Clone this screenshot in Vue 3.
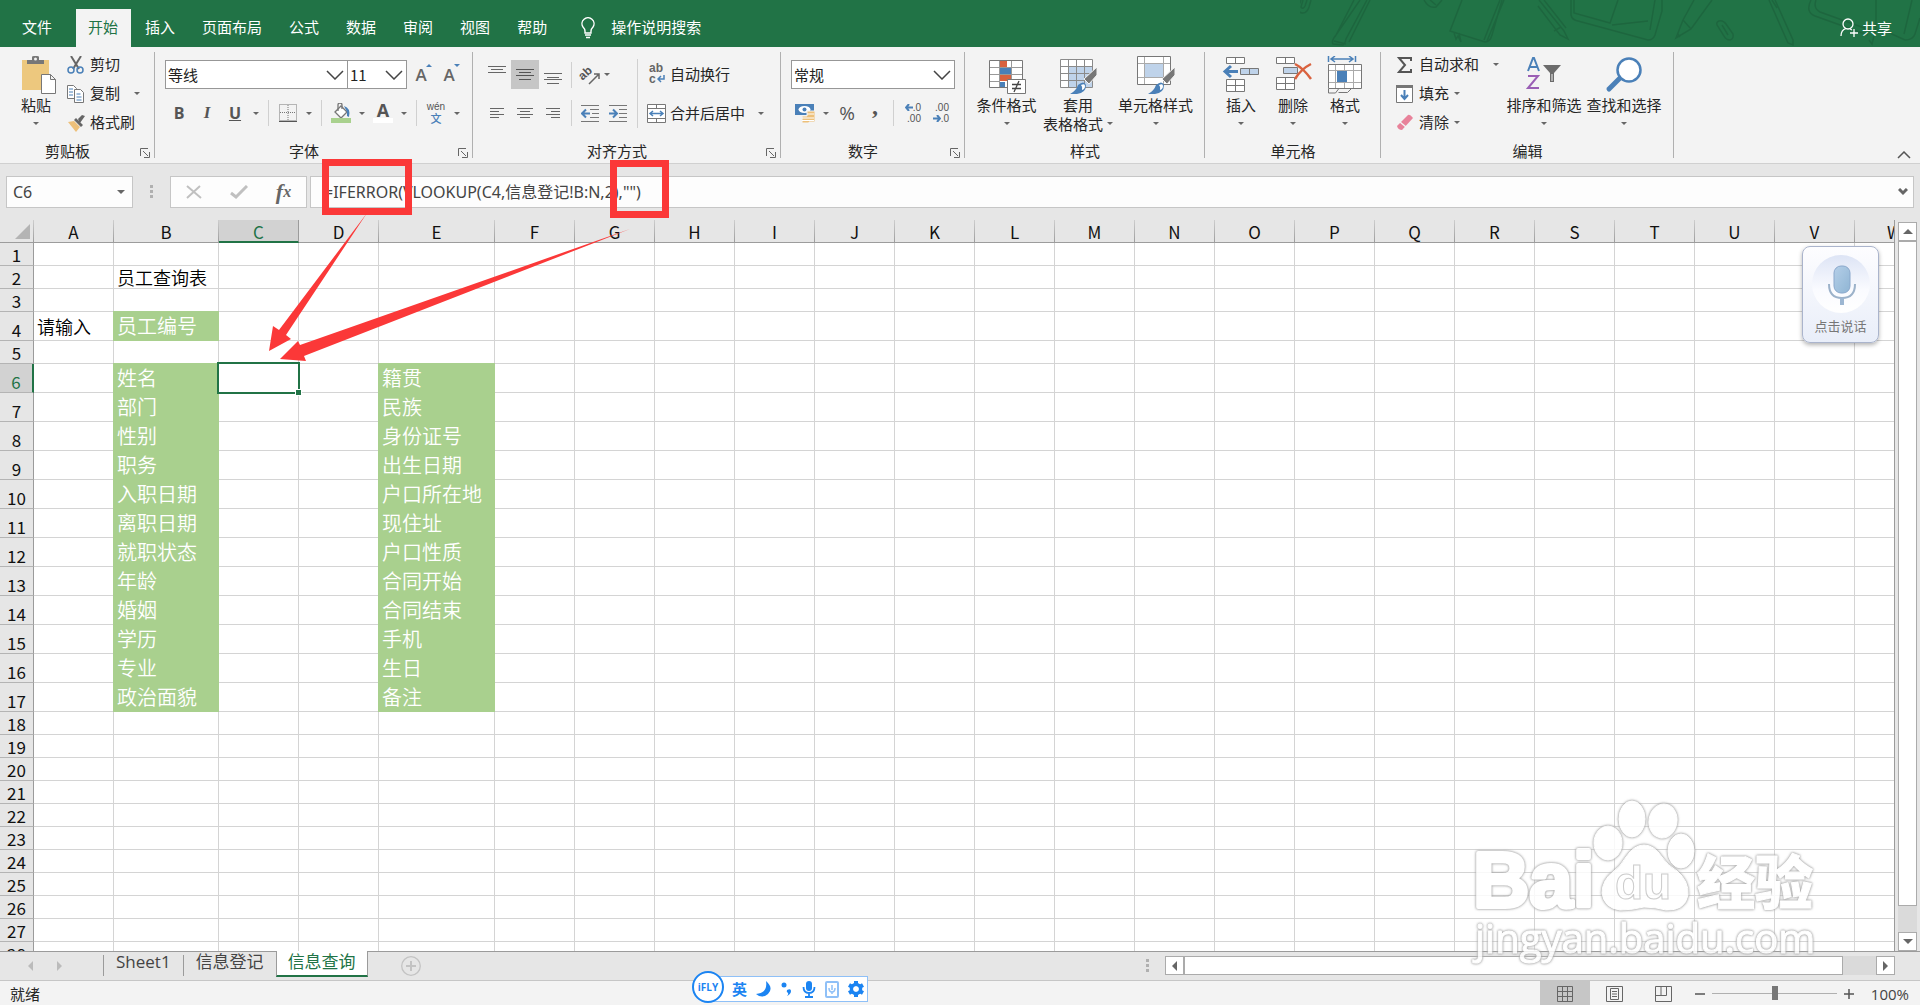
<script setup>
const tabs = ['文件', '开始', '插入', '页面布局', '公式', '数据', '审阅', '视图', '帮助']

const letters = 'ABCDEFGHIJKLMNOPQRSTUVW'.split('')
const wide = { B: 105, E: 116 }
const columns = letters.map((name) => ({ name, width: wide[name] || 80 }))

const left = ['姓名', '部门', '性别', '职务', '入职日期', '离职日期', '就职状态', '年龄', '婚姻', '学历', '专业', '政治面貌']
const right = ['籍贯', '民族', '身份证号', '出生日期', '户口所在地', '现住址', '户口性质', '合同开始', '合同结束', '手机', '生日', '备注']

const cells = { B2: { text: '员工查询表' }, A4: { text: '请输入' }, B4: { text: '员工编号', green: true } }
left.forEach((text, i) => { cells['B' + (i + 6)] = { text, green: true } })
right.forEach((text, i) => { cells['E' + (i + 6)] = { text, green: true } })

const rows = Array.from({ length: 28 }, (_, i) => {
  const n = i + 1
  return { n, tall: n === 4 || (n >= 6 && n <= 17) }
})
const cell = (c, n) => cells[c + n] || {}
const formula = '=IFERROR(VLOOKUP(C4,信息登记!B:N,2),"")'
</script>

<template>
  <div class="app">
    <header class="titlebar">
      <svg class="doodles" width="620" height="47" viewBox="1300 0 620 47" fill="none" stroke="#1d633d" stroke-width="1.5" aria-hidden="true">
        <path d="M1301 0l-3 8q0 5 5 5q4 0 6-6l2-7M1303 0l-2 7q2 3 4-1l2-6" />
        <path d="M1360 0l-24 35q-5 6-3 9l10 1q3-3 3-6l21-39M1354 0l-19 37M1349 42l21-42M1334 41l12 3" />
        <path d="M1424 0q5 9 12 7l6-7M1430 0l6 5" />
        <path d="M1462 0l-12 31 35 11q5 0 7-7l10-35M1484 40l16-40M1487 41l17-41M1454 33l2 6 2-3 3 6-2-9" />
        <path d="M1539 0l25 31 4 8-8-4-22-29M1544 0l22 28M1554 31l7-4" />
        <path d="M1571 0v15q1 5 7 6l70 19q5 0 7-5l7-24V0M1574 0v13l36 10 8-23M1612 25l36-4M1655 0l-5 30" />
        <path d="M1683 20l-7 18 15-9 21-29M1683 20l11-20M1683 20l8 9M1678 34l2 3" />
        <path d="M1719 21q4-1 7 3l7 10q1 5-3 6-4 0-6-4l-7-11q-1-3 2-4zM1722 25l6 10" />
        <path d="M1769 0l19 43 5 2v-5L1775 0M1772 0l5 8" />
        <path d="M1811 0q-6 12 4 16l53 19M1816 0q-3 8 4 12l50 18M1876 0v28l-4 16-3-4M1905 40q8 0 10-6l5-16M1881 29l24 11M1912 0l-8 34" />
      </svg>
      <nav class="tabs">
        <button v-for="(t, i) in tabs" :key="t" class="tab" :class="{ active: i === 1, file: i === 0 }">{{ t }}</button>
        <button class="tell">
          <svg width="16" height="22" viewBox="0 0 16 22" fill="none" stroke="#fff" stroke-width="1.4"><path d="M5 16v-2q0-2-2-4a6 6 0 1 1 10 0q-2 2-2 4v2zM5 18h6M6 20.500h4" /></svg>
          <span>操作说明搜索</span>
        </button>
      </nav>
      <button class="share">
        <svg width="19" height="20" viewBox="0 0 19 20" fill="none" stroke="#fff" stroke-width="1.300"><circle cx="8" cy="6" r="5" /><path d="M1 18q0-6 5-7.500M10 11l2 1M14 11v8M10 15h8" /></svg>
        <span>共享</span>
      </button>
    </header>

    <section class="ribbon">
      <div class="group g-clip">
        <div class="body">
          <button class="big paste">
            <svg width="38" height="38" viewBox="0 0 38 38"><path d="M2 4h27v30H2z" fill="#edc87e" /><path d="M7 8V4h5V1q0-1 2-1h3q2 0 2 1v3h5v4z" fill="#777" /><circle cx="15.500" cy="3" r="1.500" fill="#f3f3f3" /><path d="M21.500 18.500h9l5 5v14h-14zM30.500 18.500v5h5" fill="#fff" stroke="#777" /></svg>
            <span>粘贴</span><span><i class="caret"></i></span>
          </button>
          <div class="stack">
            <button class="small"><svg width="18" height="18" viewBox="0 0 18 18" fill="none"><path d="M4 0l8 13M14 0L6 13" stroke="#666" stroke-width="2" /><circle cx="4" cy="14" r="3" stroke="#4a80b8" stroke-width="1.500" /><circle cx="13" cy="14" r="3" stroke="#4a80b8" stroke-width="1.500" /></svg><span>剪切</span></button>
            <button class="small"><svg width="18" height="18" viewBox="0 0 18 18" fill="#fff" stroke="#777"><path d="M.5.500h6l3 3v10h-9z" /><path d="M7.500 4.500h6l3 3v10h-9z" /><path d="M2 4h4M2 7h4M2 10h4M9.500 9h4M9.500 12h5M9.500 15h5" stroke="#4a80b8" /></svg><span>复制</span><i class="caret far"></i></button>
            <button class="small"><svg width="18" height="18" viewBox="0 0 18 18"><path d="M1 8l6-1 6 6-4 5z" fill="#edc07a" /><path d="M7 6l2-2 7 7-2 2zM11 5l4-4 3 1-5 7z" fill="#666" /></svg><span>格式刷</span></button>
          </div>
        </div>
        <div class="title dlg">剪贴板<svg class="launch" width="10" height="10" viewBox="0 0 10 10" fill="none" stroke="#666"><path d="M.5 8V.5H8M3 3l5 5M9.500 4v5.500H4" /></svg></div>
      </div>

      <div class="group g-font">
        <div class="body rows">
          <div class="row">
            <label class="combo fontname"><select aria-label="字体"><option>等线</option></select><svg width="18" height="10" viewBox="0 0 18 10" fill="none" stroke="#444" stroke-width="1.500"><path d="M1 1l8 8 8-8" /></svg></label>
            <label class="combo fontsize"><select aria-label="字号"><option>11</option></select><svg width="18" height="10" viewBox="0 0 18 10" fill="none" stroke="#444" stroke-width="1.500"><path d="M1 1l8 8 8-8" /></svg></label>
            <button class="tool grow" aria-label="增大字号">A<i class="up"></i></button>
            <button class="tool grow" aria-label="减小字号">A<i class="down"></i></button>
          </div>
          <div class="row low">
            <button class="tool bold">B</button><button class="tool ital">I</button><button class="tool under">U</button><button class="drop" aria-label="下划线选项"><i class="caret"></i></button>
            <span class="sep"></span>
            <button class="tool" aria-label="边框"><svg width="18" height="18" viewBox="0 0 18 18" fill="none" stroke="#777"><path d="M.5.500h17v16H.5zM9 1v16M1 8.500h16" stroke-dasharray="1 1" /><path d="M0 17.500h18" stroke="#555" /></svg></button><button class="drop" aria-label="边框选项"><i class="caret"></i></button>
            <span class="sep"></span>
            <button class="tool" aria-label="填充颜色"><svg width="20" height="20" viewBox="0 0 20 20"><path d="M4 9l6-6 6 6-6 6z" fill="#fff" stroke="#777" stroke-width="1.300" /><path d="M7 8V2q0-2 2-2t2 2v4" fill="none" stroke="#777" stroke-width="1.300" /><path d="M13 3q7 2 5 11l-2-1v-4z" fill="#4a80b8" /><path d="M0 15h20v5H0z" fill="#a9d18e" /></svg></button><button class="drop" aria-label="填充选项"><i class="caret"></i></button>
            <button class="tool fontcolor" aria-label="字体颜色">A</button><button class="drop" aria-label="字体颜色选项"><i class="caret"></i></button>
            <span class="sep"></span>
            <button class="tool pinyin"><span>wén</span><b>文</b></button><button class="drop" aria-label="拼音选项"><i class="caret"></i></button>
          </div>
        </div>
        <div class="title dlg">字体<svg class="launch" width="10" height="10" viewBox="0 0 10 10" fill="none" stroke="#666"><path d="M.5 8V.5H8M3 3l5 5M9.500 4v5.500H4" /></svg></div>
      </div>

      <div class="group g-align">
        <div class="body">
          <div class="rows">
            <div class="row">
              <button class="tool" aria-label="顶端对齐"><svg width="18" height="18" viewBox="0 0 18 18" stroke="#666"><path d="M0 .5h18M3 3.500h12M0 6.500h18" /></svg></button>
              <button class="tool pressed" aria-label="垂直居中"><svg width="18" height="18" viewBox="0 0 18 18" stroke="#555"><path d="M0 3.500h18M3 6.500h12M0 9.500h18M3 13.500h12" /></svg></button>
              <button class="tool" aria-label="底端对齐"><svg width="18" height="18" viewBox="0 0 18 18" stroke="#666"><path d="M0 7.500h18M3 11.500h12M0 13.500h18M3 17.500h12" /></svg></button>
              <span class="sep tight"></span>
              <button class="tool narrow" aria-label="方向"><span class="slant">ab</span><svg class="slantarrow" width="12" height="12" viewBox="0 0 12 12"><path d="M1 11L11 1M6 1h5v5" fill="none" stroke="#666" stroke-width="1.500" /></svg></button>
              <button class="drop" aria-label="方向选项"><i class="caret"></i></button>
            </div>
            <div class="row low">
              <button class="tool" aria-label="左对齐"><svg width="18" height="12" viewBox="0 0 18 12" stroke="#666"><path d="M2 1.500h14M2 4.500h9M2 7.500h14M2 10.500h9" /></svg></button>
              <button class="tool" aria-label="居中"><svg width="18" height="12" viewBox="0 0 18 12" stroke="#666"><path d="M1 1.500h16M4 4.500h10M1 7.500h16M4 10.500h10" /></svg></button>
              <button class="tool" aria-label="右对齐"><svg width="18" height="12" viewBox="0 0 18 12" stroke="#666"><path d="M2 1.500h14M7 4.500h9M2 7.500h14M7 10.500h9" /></svg></button>
              <span class="sep tight"></span>
              <button class="tool" aria-label="减少缩进"><svg width="18" height="17" viewBox="0 0 18 17" fill="none" stroke="#777"><path d="M0 .5h18M9 4.500h9M11 8.500h7M9 12.500h9M0 16.500h18" /><path d="M9 8.500H2M5 4.500l-4 4 4 4" stroke="#4a80b8" stroke-width="2" /></svg></button>
              <button class="tool" aria-label="增加缩进"><svg width="18" height="17" viewBox="0 0 18 17" fill="none" stroke="#777"><path d="M0 .5h18M10 4.500h8M10 8.500h8M10 12.500h8M0 16.500h18" /><path d="M0 8.500h7M4 4.500l4 4-4 4" stroke="#4a80b8" stroke-width="2" /></svg></button>
            </div>
          </div>
          <span class="tallsep"></span>
          <div class="rows wraps">
            <button class="small"><span class="wrapicon"><span>ab</span><span>c<svg width="8" height="8" viewBox="0 0 8 8" fill="none" stroke="#4a80b8" stroke-width="1.500"><path d="M7 0v4H1M4 1L1 4l3 3" /></svg></span></span><span>自动换行</span></button>
            <button class="small"><svg width="20" height="19" viewBox="0 0 20 19" fill="#fff" stroke="#777"><path d="M1.500.500h18v18h-18zM10.500.500v4M10.500 14.500v4M1.500 4.500h18M1.500 14.500h18" /><path d="M5 9.500h11M7 7L4 9.500 7 12M14 7l3 2.500-3 2.500" fill="none" stroke="#4a80b8" stroke-width="1.500" /></svg><span>合并后居中</span><i class="caret far"></i></button>
          </div>
        </div>
        <div class="title dlg">对齐方式<svg class="launch" width="10" height="10" viewBox="0 0 10 10" fill="none" stroke="#666"><path d="M.5 8V.5H8M3 3l5 5M9.500 4v5.500H4" /></svg></div>
      </div>

      <div class="group g-num">
        <div class="body rows">
          <div class="row">
            <label class="combo numfmt"><select aria-label="数字格式"><option>常规</option></select><svg width="18" height="10" viewBox="0 0 18 10" fill="none" stroke="#444" stroke-width="1.500"><path d="M1 1l8 8 8-8" /></svg></label>
          </div>
          <div class="row low">
            <button class="tool" aria-label="会计格式"><svg width="20" height="20" viewBox="0 0 20 20"><path d="M0 1h19v11H0z" fill="#4a80b8" /><ellipse cx="9.500" cy="6.500" rx="6" ry="3.500" fill="#fff" /><circle cx="9.500" cy="6.500" r="2" fill="#4a80b8" /><path d="M12 8h8v11h-6v1H7v-7h5z" fill="#edc07a" stroke="#f3f3f3" /><path d="M12 11h7M7 15h12M7 17.500h12" stroke="#fff" /></svg></button><button class="drop" aria-label="会计格式选项"><i class="caret"></i></button>
            <button class="tool pct">%</button><button class="tool comma">,</button>
            <span class="sep tight"></span>
            <button class="tool dec" aria-label="增加小数位数"><span><svg width="8" height="7" viewBox="0 0 8 7" fill="none" stroke="#4a80b8" stroke-width="2"><path d="M8 3.500H2M4 0L1 3.500 4 7" /></svg>.0</span><span>.00</span></button>
            <button class="tool dec" aria-label="减少小数位数"><span>.00</span><span><svg width="8" height="7" viewBox="0 0 8 7" fill="none" stroke="#4a80b8" stroke-width="2"><path d="M0 3.500h6M4 0l3 3.500L4 7" /></svg>.0</span></button>
          </div>
        </div>
        <div class="title dlg">数字<svg class="launch" width="10" height="10" viewBox="0 0 10 10" fill="none" stroke="#666"><path d="M.5 8V.5H8M3 3l5 5M9.500 4v5.500H4" /></svg></div>
      </div>

      <div class="group g-style">
        <div class="body">
          <button class="big w75">
            <svg width="38" height="38" viewBox="0 0 38 38"><path d="M1.500 4.500h33v27h-33z" fill="#fff" stroke="#777" /><path d="M12 5h7v6h-7zM12 19h11v6H12z" fill="#d9623f" /><path d="M12 12h11v6H12zM12 26h5v5h-5z" fill="#4a80b8" /><path d="M11.500 5v26M23.500 5v26M2 11.500h32M2 18.500h32M2 25.500h10" stroke="#999" fill="none" /><path d="M19.500 23.500h18v14h-18z" fill="#fff" stroke="#777" /><path d="M24 28.500h9M24 32.500h9M31 25l-5 11" stroke="#444" stroke-width="1.300" /></svg>
            <span>条件格式</span><span><i class="caret"></i></span>
          </button>
          <button class="big w70">
            <svg width="38" height="38" viewBox="0 0 38 38"><path d="M1.500 3.500h32v28h-32z" fill="#fff" /><path d="M10 11h24v20H10z" fill="#bfd3ea" /><path d="M1.500 3.500h32v28h-32zM9.500 4v27M17.500 4v27M25.500 4v27M2 10.500h31M2 17.500h31M2 24.500h31" fill="none" stroke="#8a8a8a" /><path d="M38 11v8l-8 9-5-5z" fill="#777" stroke="#f3f3f3" /><path d="M11 38q6-3 8-9 6-5 8 0 0 8-9 9z" fill="#4a80b8" /><path d="M22 29q4-2 4 1t-3 4q1-3-1-5z" fill="#fff" /></svg>
            <span>套用</span><span>表格格式<i class="caret"></i></span>
          </button>
          <button class="big w85">
            <svg width="38" height="38" viewBox="0 0 38 38"><path d="M.5.500h33v28H.5z" fill="#fff" stroke="#777" /><path d="M7.500 1v27M26.500 1v27M1 7.500h32M1 21.500h32" stroke="#aaa" /><path d="M8 8h18v13H8z" fill="#bfd3ea" /><path d="M38 11v8l-8 9-5-5z" fill="#777" stroke="#f3f3f3" /><path d="M11 38q6-3 8-9 6-5 8 0 0 8-9 9z" fill="#4a80b8" /><path d="M22 29q4-2 4 1t-3 4q1-3-1-5z" fill="#fff" /></svg>
            <span>单元格样式</span><span><i class="caret"></i></span>
          </button>
        </div>
        <div class="title">样式</div>
      </div>

      <div class="group g-cells">
        <div class="body">
          <button class="big w52">
            <svg width="38" height="38" viewBox="0 0 38 38" fill="#fff" stroke="#777"><path d="M4.500 1.500h18v6h-18zM13.500 1.500v6M4.500 23.500h18v12h-18zM13.500 23.500v12M4.500 29.500h18" /><path d="M18.500 12.500h18v6h-18zM27.500 12.500v6" fill="#bfd3ea" /><path d="M16 15.500H4M9 10l-6 5.500L9 21" fill="none" stroke="#4a80b8" stroke-width="3" /></svg>
            <span>插入</span><span><i class="caret"></i></span>
          </button>
          <button class="big w52">
            <svg width="38" height="38" viewBox="0 0 38 38" fill="#fff" stroke="#777"><path d="M2.500 1.500h18v6h-18zM11.500 1.500v6M2.500 21.500h18v12h-18zM11.500 21.500v12M2.500 27.500h18" /><path d="M9.500 11.500h14v6h-14z" fill="#bfd3ea" /><path d="M21 8q8 4 16 15M37 8q-10 5-16 15" fill="none" stroke="#d9623f" stroke-width="2.500" /></svg>
            <span>删除</span><span><i class="caret"></i></span>
          </button>
          <button class="big w52">
            <svg width="38" height="38" viewBox="0 0 38 38" fill="#fff" stroke="#777"><path d="M2.500 8.500h33v24h-33z" /><path d="M9.500 9v23M18.500 9v23M27.500 9v23M3 14.500h32M3 26.500h32" stroke="#aaa" /><path d="M11 15h10v11H11z" fill="#4a80b8" stroke="none" /><path d="M2.500 33v4h7l3-4M12.500 36.500h9l4-4" fill="none" /><path d="M2.500 0v6M29.500 0v6M6 3h20M9 0L5 3l4 3M23 0l4 3-4 3" fill="none" stroke="#4a80b8" stroke-width="1.500" /></svg>
            <span>格式</span><span><i class="caret"></i></span>
          </button>
        </div>
        <div class="title">单元格</div>
      </div>

      <div class="group g-edit">
        <div class="body">
          <div class="stack">
            <button class="small"><svg width="18" height="18" viewBox="0 0 18 18" fill="none" stroke="#555" stroke-width="2"><path d="M15 5V2H3l6 7-6 7h12v-3" /></svg><span>自动求和</span><i class="caret far"></i></button>
            <button class="small"><svg width="18" height="18" viewBox="0 0 18 18"><path d="M.5.500h16v17H.5z" fill="#fff" stroke="#777" /><path d="M0 0h17v3H0z" fill="#777" /><path d="M8.500 5v9M5 10l3.500 4 3.500-4" fill="none" stroke="#4a80b8" stroke-width="2" /></svg><span>填充</span><i class="caret"></i></button>
            <button class="small"><svg width="18" height="18" viewBox="0 0 18 18"><path d="M1 12L12 1q2-1 5 3L6 16q-4 0-5-4z" fill="#e8829a" /><path d="M4 8l6 5" stroke="#f3f3f3" stroke-width="1.500" /></svg><span>清除</span><i class="caret"></i></button>
          </div>
          <button class="big w80">
            <svg width="38" height="38" viewBox="0 0 38 38"><path d="M3 15L8 2h1l5 13M5 11h7" fill="none" stroke="#4a80b8" stroke-width="2" /><path d="M3 20h10L3 32h11" fill="none" stroke="#9a5fb5" stroke-width="2" /><path d="M18 9h18l-7 8v9h-4v-9z" fill="#6b6b6b" /><path d="M27 18v7" stroke="#f3f3f3" /></svg>
            <span>排序和筛选</span><span><i class="caret"></i></span>
          </button>
          <button class="big w80">
            <svg width="38" height="38" viewBox="0 0 38 38"><path d="M4 33l12-12" stroke="#4a80b8" stroke-width="5" stroke-linecap="round" /><circle cx="24" cy="14" r="11.500" fill="#fff" stroke="#4a80b8" stroke-width="2.500" /></svg>
            <span>查找和选择</span><span><i class="caret"></i></span>
          </button>
        </div>
        <div class="title">编辑</div>
      </div>
      <button class="collapse" aria-label="折叠功能区"><svg width="14" height="8" viewBox="0 0 14 8" fill="none" stroke="#555" stroke-width="1.500"><path d="M1 7l6-6 6 6" /></svg></button>
    </section>

    <section class="formulabar">
      <div class="box namebox"><input value="C6" aria-label="名称框"><i class="caret wide"></i></div>
      <span class="dots"></span>
      <div class="box fx">
        <button aria-label="取消"><svg width="16" height="14" viewBox="0 0 16 14" fill="none" stroke="#c0c0c0" stroke-width="2"><path d="M1 1l14 12M14 1L1 13" /></svg></button>
        <button aria-label="输入"><svg width="18" height="14" viewBox="0 0 18 14" fill="none" stroke="#c0c0c0" stroke-width="3"><path d="M1 8l5 4L17 1" /></svg></button>
        <button class="fxb">f<sub>x</sub></button>
      </div>
      <div class="box formula"><input :value="formula" aria-label="编辑栏"><svg width="10" height="8" viewBox="0 0 10 8" fill="none" stroke="#666" stroke-width="3"><path d="M1 1l4 4 4-4" /></svg></div>
    </section>

    <main class="sheet">
      <div class="gridwrap">
        <table class="grid">
          <colgroup><col class="rowcol"><col v-for="c in columns" :key="c.name" :style="{ width: c.width + 'px' }"></colgroup>
          <thead>
            <tr>
              <th class="corner"><svg width="15" height="15" viewBox="0 0 15 15"><path d="M15 0v15H0z" fill="#b4b4b4" /></svg></th>
              <th v-for="c in columns" :key="c.name" :class="{ sel: c.name === 'C' }">{{ c.name }}</th>
            </tr>
          </thead>
          <tbody>
            <tr v-for="r in rows" :key="r.n" :class="{ tall: r.tall }">
              <th :class="{ sel: r.n === 6 }">{{ r.n }}</th>
              <td v-for="c in columns" :key="c.name" :class="{ green: cell(c.name, r.n).green }">
                {{ cell(c.name, r.n).text }}<span v-if="c.name === 'C' && r.n === 6" class="cursor"></span>
              </td>
            </tr>
          </tbody>
        </table>
      </div>
      <div class="vscroll">
        <button class="sb" aria-label="向上滚动"><i class="tri t-up"></i></button>
        <div class="vthumb"></div>
        <div class="vtrack"></div>
        <button class="sb" aria-label="向下滚动"><i class="tri t-down"></i></button>
      </div>
      <button class="voice">
        <svg width="58" height="60" viewBox="0 0 58 60">
          <defs>
            <linearGradient id="disc" x2="0" y2="1"><stop offset="0" stop-color="#dde4f5" /><stop offset=".6" stop-color="#fafbff" /><stop offset="1" stop-color="#fff" /></linearGradient>
            <linearGradient id="mic" x2="1" y2="1"><stop offset="0" stop-color="#b5cfe8" /><stop offset="1" stop-color="#8fb5d4" /></linearGradient>
          </defs>
          <circle cx="29" cy="30" r="29" fill="url(#disc)" />
          <rect x="22" y="12" width="16" height="27" rx="7" fill="url(#mic)" stroke="#8aa8cc" />
          <path d="M17 30q0 14 13 14t13-14" fill="none" stroke="#9cb2ca" stroke-width="2" /><path d="M30 44v7" stroke="#9cb6d2" stroke-width="4" />
        </svg>
        <span>点击说话</span>
      </button>
    </main>

    <section class="tabbar">
      <div class="sheetnav"><i class="tri t-left dim"></i><i class="tri t-right dim"></i></div>
      <button class="stab">Sheet1</button>
      <button class="stab">信息登记</button>
      <button class="stab on">信息查询</button>
      <button class="add" aria-label="新工作表"><svg width="20" height="20" viewBox="0 0 20 20" fill="none" stroke="#c3c3c3"><circle cx="10" cy="10" r="9.300" stroke-width="1.300" /><path d="M10 5v10M5 10h10" stroke-width="2" /></svg></button>
      <span class="dots bottom"></span>
      <div class="hscroll">
        <button class="sb" aria-label="向左滚动"><i class="tri t-left"></i></button>
        <div class="hthumb"></div>
        <div class="htrack"></div>
        <button class="sb" aria-label="向右滚动"><i class="tri t-right"></i></button>
      </div>
    </section>

    <footer class="status">
      <span class="ready">就绪</span>
      <button class="view on" aria-label="普通"><svg width="16" height="16" viewBox="0 0 16 16" fill="none" stroke="#666"><path d="M.5.500h15v15H.5zM5.500 0v16M10.500 0v16M0 5.500h16M0 10.500h16" /></svg></button>
      <button class="view" aria-label="页面布局"><svg width="17" height="16" viewBox="0 0 17 16" fill="none" stroke="#666"><path d="M.5.500h16v15H.5zM4.500 2.500h8v11h-8zM6 5.500h5M6 8h5M6 10.500h5" /></svg></button>
      <button class="view" aria-label="分页预览"><svg width="17" height="16" viewBox="0 0 17 16" fill="none" stroke="#666"><path d="M.5.500h16v15H.5zM.5 9.500h11v-9M6 0v9" /></svg></button>
      <button class="zoom" aria-label="缩小"><svg width="10" height="10" viewBox="0 0 10 10" stroke="#555"><path d="M0 5h10" stroke-width="1.500" /></svg></button>
      <input class="slider" type="range" min="0" max="100" value="50" aria-label="显示比例">
      <button class="zoom" aria-label="放大"><svg width="10" height="10" viewBox="0 0 10 10" stroke="#555"><path d="M0 5h10M5 0v10" stroke-width="1.500" /></svg></button>
      <span class="percent">100%</span>
    </footer>

    <svg class="marks" width="680" height="370" viewBox="0 0 680 370" aria-hidden="true">
      <path d="M325.500 162.500h83v49h-83zM613.500 163.500h52v51h-52z" fill="none" stroke="#fb3838" stroke-width="7" />
      <path d="M367 213L279 330l-6-4-4 25 22-12-5-4zM630 229L300 345l-2-4-18 18 26 2-2-5z" fill="#fb3838" />
    </svg>

    <div class="ime">
      <span class="imebar">
        <b>英</b>
        <svg width="16" height="16" viewBox="0 0 16 16"><path d="M10 0q8 7 2 13-6 5-12 0 12-1 10-13z" fill="#1b84f2" /></svg>
        <svg width="12" height="16" viewBox="0 0 12 16" fill="#1b84f2"><circle cx="3" cy="4" r="2.500" /><path d="M6 9q4-2 4 1t-4 5q2-2 1-3-2-1-1-3z" /></svg>
        <svg width="14" height="17" viewBox="0 0 14 17"><rect x="4" y="0" width="6" height="10" rx="3" fill="#1b84f2" /><path d="M1.500 6q0 6 5.500 6t5.500-6M7 12v4M3 16h8" fill="none" stroke="#1b84f2" stroke-width="1.800" /></svg>
        <svg width="14" height="17" viewBox="0 0 14 17"><rect x="1" y="1" width="12" height="15" rx="1" fill="#fff" stroke="#8fc0f7" stroke-width="2" /><path d="M7 4v5M4 7q0 4 3 4t3-4M7 11v2" fill="none" stroke="#8fc0f7" stroke-width="1.500" /></svg>
        <svg width="16" height="16" viewBox="0 0 16 16"><circle cx="8" cy="8" r="4.500" fill="none" stroke="#1b84f2" stroke-width="3.500" /><path d="M8 0v4M8 12v4M1 4l3.500 2M11.500 10l3.500 2M1 12l3.500-2M11.500 6L15 4" stroke="#1b84f2" stroke-width="4" /><circle cx="8" cy="8" r="2.500" fill="#fff" /></svg>
      </span>
      <span class="ifly">iFLY</span>
    </div>

    <svg class="watermark" width="360" height="176" viewBox="0 0 360 176" aria-hidden="true">
      <g class="wm">
        <ellipse cx="145" cy="46" rx="14" ry="17" /><ellipse cx="169" cy="22" rx="13" ry="18" /><ellipse cx="200" cy="24" rx="14" ry="17" transform="rotate(10 200 24)" /><ellipse cx="218" cy="54" rx="13" ry="17" />
        <path d="M181 48q10 0 18 12 5 8 15 14 12 10 11 24-3 16-22 15-11-3-22-3-12 3-24 3-16-2-18-17 0-13 12-22 6-4 12-14 8-12 18-12z" />
        <text x="10" y="110" class="bai">Bai</text>
        <text x="234" y="107" class="jy">经验</text>
        <text x="12" y="156" class="url">jingyan.baidu.com</text>
      </g>
      <text x="152" y="102" class="du">du</text>
    </svg>
  </div>
</template>

<style>
body { margin: 0; }
</style>

<style scoped>
.app { position: relative; display: flex; flex-direction: column; height: 100vh; overflow: hidden; background: #e6e6e6; color: #262626; font: 15px/20px "Noto Sans CJK SC", sans-serif; }
button { border: 0; padding: 0; margin: 0; background: none; color: inherit; font: inherit; display: flex; align-items: center; justify-content: center; white-space: nowrap; }
input, select { font: inherit; color: inherit; border: 0; padding: 0; margin: 0; background: none; outline: none; appearance: none; min-width: 0; }
svg { flex: none; display: block; }

.titlebar { position: relative; flex: none; height: 47px; background: #217346; color: #fff; display: flex; justify-content: space-between; align-items: flex-end; }
.doodles { position: absolute; right: 0; top: 0; opacity: .8; }
.tabs { display: flex; height: 38px; }
.tab { padding: 0 13px 3px 14px; height: 38px; }
.tab.file { padding: 0 24px 3px 22px; }
.tab.active { background: #f3f3f3; color: #217346; padding: 0 13px 3px 12px; }
.tell { margin-left: 20px; gap: 15px; }
.tell span { padding-bottom: 2px; }
.share { position: relative; height: 38px; gap: 3px; padding-right: 28px; }

.ribbon { position: relative; flex: none; display: flex; padding: 3px 0 5px; background: #f3f3f3; border-bottom: 1px solid #d0d0d0; }
.group { position: relative; flex: none; height: 108px; box-sizing: border-box; display: flex; flex-direction: column; }
.group::after { content: ""; position: absolute; right: 0; top: 2px; bottom: 0; width: 1px; background: #b0b0b0; }
.g-clip { width: 155px; } .g-font { width: 318px; } .g-align { width: 308px; } .g-num { width: 184px; }
.g-style { width: 240px; } .g-cells { width: 176px; } .g-edit { width: 293px; }
.body { height: 94px; display: flex; }
.title { position: relative; height: 14px; line-height: 14px; text-align: center; }
.title.dlg { padding-right: 20px; }
.launch { position: absolute; right: 5px; top: 4px; }
.rows { display: flex; flex-direction: column; gap: 11px; padding-top: 10px; box-sizing: border-box; }
.row { display: flex; align-items: center; height: 29px; }
.row.low { height: 26px; }
.g-font .rows, .g-num .rows { padding-left: 10px; }
.g-align .rows { padding-left: 10px; }
.stack { display: flex; flex-direction: column; }
.small { height: 29px; justify-content: flex-start; gap: 5px; }
.small > span { padding-bottom: 2px; }
.g-clip .stack { padding-left: 4px; }
.g-edit .stack { padding-left: 15px; width: 108px; }
.caret { display: inline-block; width: 0; height: 0; border: 3px solid transparent; border-top: 3px solid #666; border-bottom: 0; }
.caret.wide { border-width: 4px 4px 0; }
.caret.far { margin-left: 9px; }
.big { flex-direction: column; justify-content: flex-start; padding-top: 6px; }
.big svg { margin-bottom: 1px; }
.big span { height: 19px; line-height: 20px; display: flex; align-items: center; gap: 4px; }
.paste { width: 63px; padding-left: 12px; align-items: flex-start; box-sizing: border-box; }
.paste svg { margin-left: 8px; }
.paste span { width: 48px; justify-content: center; }
.w75 { width: 73px; } .w70 { width: 70px; } .w85 { width: 85px; } .w52 { width: 52px; } .w80 { width: 80px; }
.g-style .body { padding-left: 5px; }
.g-cells .body { padding-left: 10px; }
.combo { position: relative; display: flex; align-items: center; box-sizing: border-box; height: 29px; background: #fff; border: 1px solid #979797; color: #222; }
.combo select { width: 100%; height: 27px; padding-left: 2px; }
.combo svg { position: absolute; right: 3px; pointer-events: none; }
.fontname { width: 183px; } .fontsize { width: 60px; margin-left: -1px; } .numfmt { width: 164px; }
.tool { width: 28px; height: 26px; color: #555; }
.tool.narrow { position: relative; width: 24px; }
.slant { font: 700 12px/14px "Liberation Sans", sans-serif; transform: rotate(-42deg); margin: 0 6px 4px 0; }
.slantarrow { position: absolute; right: 0; bottom: 3px; }
.pressed { background: #c6c6c6; height: 29px; }
.drop { width: 14px; height: 26px; }
.sep { width: 1px; height: 26px; background: #d0d0d0; margin: 0 5px; }
.sep.tight { margin: 0 4px; }
.tallsep { width: 1px; height: 69px; margin: 9px 0 0 5px; background: #d0d0d0; }
.g-align .wraps { padding-left: 8px; gap: 10px; }
.wraps .small { gap: 4px; }
.wrapicon { display: flex; flex-direction: column; width: 20px; padding-left: 3px; box-sizing: border-box; font: 700 12px/11px "Liberation Sans", sans-serif; color: #666; }
.wrapicon span { display: flex; align-items: center; gap: 1px; }
.grow { position: relative; font: 600 17px/26px "Open Sans", sans-serif; color: #666; }
.grow i { position: absolute; right: 3px; top: 2px; border: 3px solid transparent; border-bottom-color: #4a80b8; border-top: 0; }
.grow i.down { border: 3px solid transparent; border-top-color: #4a80b8; border-bottom: 0; }
.bold { font: 700 16px/26px "Open Sans", sans-serif; }
.ital { font: italic 700 17px/26px "Liberation Serif", serif; }
.under { font: 700 16px/26px "Open Sans", sans-serif; text-decoration: underline; }
.fontcolor { position: relative; font: 700 18px/20px "Open Sans", sans-serif; align-items: flex-start; }
.fontcolor::after { content: ""; position: absolute; left: 4px; bottom: 3px; width: 20px; height: 5px; background: #fff; }
.pinyin { flex-direction: column; }
.pinyin span { font: 10px/10px "Liberation Sans", sans-serif; }
.pinyin b { font-weight: 500; font-size: 11px; line-height: 12px; color: #4a80b8; }
.pct { font: 19px/26px "Open Sans", sans-serif; }
.comma { font: 700 24px/12px "Liberation Serif", serif; align-items: flex-start; }
.dec { flex-direction: column; font: 10px/11px "Liberation Sans", sans-serif; align-items: flex-end; padding-right: 5px; box-sizing: border-box; }
.dec span { display: flex; align-items: center; }
.collapse { position: absolute; right: 9px; bottom: 4px; }

.formulabar { flex: none; display: flex; height: 32px; padding: 12px 6px; }
.box { display: flex; align-items: center; box-sizing: border-box; height: 32px; background: #fdfdfd; border: 1px solid #c6c6c6; color: #444; }
.namebox { width: 127px; padding: 0 7px 0 6px; }
.namebox input { flex: 1; font: 16px/20px "Noto Sans", sans-serif; }
.dots { width: 3px; height: 13px; margin: 9px 17px 0; background: repeating-linear-gradient(#b0b0b0 0 3px, transparent 3px 5px); }
.fx { width: 137px; margin-right: 3px; justify-content: space-around; }
.fx button { width: 45px; height: 30px; }
.fxb { font: italic 700 22px/24px "Liberation Serif", serif; color: #666; }
.fxb sub { font-size: 16px; line-height: 10px; }
.formula { flex: 1; padding: 0 5px 0 13px; }
.formula input { flex: 1; height: 28px; padding-bottom: 2px; font: 16px/24px "Noto Sans", "Noto Sans CJK SC", sans-serif; }

.sheet { position: relative; flex: 1; min-height: 0; display: flex; }
.gridwrap { flex: 1; min-width: 0; overflow: hidden; border-right: 1px solid #9b9b9b; background: #fff; }
.grid { table-layout: fixed; width: 1px; border-collapse: separate; border-spacing: 0; }
.rowcol { width: 34px; }
.grid th, .grid td { box-sizing: border-box; padding: 0; height: 23px; overflow: visible; white-space: nowrap; }
.grid th { background: #e6e6e6; color: #111; font-weight: 400; font-size: 17px; line-height: 20px; text-align: center; }
.grid thead th { border-bottom: 1px solid #9b9b9b; border-right: 1px solid; border-image: linear-gradient(#d0d0d0, #9b9b9b) 1; vertical-align: bottom; }
.grid thead .corner svg { margin: 0 0 3px 15px; }
.grid thead .sel { background: #d2d2d2; color: #217346; border-image: none; border-right-color: #9b9b9b; border-bottom: 2px solid #217346; line-height: 19px; }
.grid tbody th { border-right: 1px solid #9b9b9b; border-bottom: 1px solid #b4b4b4; vertical-align: bottom; }
.grid tbody .sel { background: #d2d2d2; color: #217346; border-right: 2px solid #217346; }
.grid td { position: relative; border-right: 1px solid #d4d4d4; border-bottom: 1px solid #d4d4d4; padding-left: 3px; font-size: 18px; line-height: 22px; font-weight: 350; color: #000; vertical-align: bottom; }
.grid .tall th, .grid .tall td { height: 29px; }
.grid .tall td { line-height: 28px; }
.grid td.green { background: #a9d08e; border-color: #a9d08e; color: #fff; font-size: 20px; line-height: 28px; vertical-align: middle; box-shadow: -1px 0 0 #a9d08e, 0 -1px 0 #a9d08e, -1px -1px 0 #a9d08e; }
.cursor { position: absolute; z-index: 1; left: -2px; top: -2px; right: -2px; bottom: -2px; border: 2px solid #217346; }
.cursor::after { content: ""; position: absolute; right: -4px; bottom: -4px; width: 5px; height: 5px; background: #217346; border: 1px solid #fff; }
.vscroll { flex: none; width: 19px; margin: 2px 3px 0; display: flex; flex-direction: column; }
.sb { flex: none; width: 19px; height: 19px; box-sizing: border-box; background: #fff; border: 1px solid #ababab; }
.vthumb { flex: 666; box-sizing: border-box; background: #fff; border: 1px solid #ababab; }
.vtrack { flex: 26; background: #dadada; }
.tri { width: 0; height: 0; border: 5px solid transparent; }
.t-up { border-bottom-color: #666; border-top: 0; }
.t-down { border-top-color: #666; border-bottom: 0; }
.t-left { border-right-color: #666; border-left: 0; }
.t-right { border-left-color: #666; border-right: 0; }
.t-left.dim { border-right-color: #bbb; }
.t-right.dim { border-left-color: #bbb; }
.voice { position: absolute; right: 41px; top: 26px; width: 77px; height: 97px; flex-direction: column; gap: 3px; border: 1px solid #aab4cc; border-radius: 8px; background: linear-gradient(#fdfdff, #e9eef9); box-shadow: 0 2px 4px rgba(0, 0, 0, .3); color: #777; font-size: 13px; line-height: 18px; }

.tabbar { position: relative; flex: none; height: 29px; box-sizing: border-box; border-top: 1px solid #9b9b9b; display: flex; align-items: flex-start; }
.sheetnav { width: 103px; height: 28px; box-sizing: border-box; padding-left: 28px; display: flex; gap: 24px; align-items: center; }
.stab { position: relative; height: 25px; padding: 0 12px 0 13px; font: 17px/20px "Open Sans", "Noto Sans CJK SC", sans-serif; color: #444; align-items: flex-start; }
.stab::before { content: ""; position: absolute; left: 0; top: 3px; height: 21px; width: 1px; background: #9b9b9b; }
.stab.on { margin-top: -1px; height: 26px; line-height: 22px; background: #fff; color: #217346; border-right: 1px solid #9b9b9b; border-left: 1px solid #9b9b9b; border-bottom: 2px solid #217346; box-sizing: border-box; padding: 0 11px; }
.stab.on::before { display: none; }
.add { margin: 4px 0 0 33px; }
.dots.bottom { margin: 7px 16px 0 auto; }
.hscroll { width: 38%; margin: 4px 25px 0 0; display: flex; }
.hthumb { flex: 657; box-sizing: border-box; background: #fff; border: 1px solid #ababab; }
.htrack { flex: 33; background: #dadada; }

.status { flex: none; height: 25px; box-sizing: border-box; border-top: 1px solid #c6c6c6; background: #f3f3f3; display: flex; align-items: center; padding-right: 11px; }
.ready { margin-left: 10px; margin-right: auto; padding-top: 1px; }
.view { width: 49px; height: 24px; padding-top: 2px; box-sizing: border-box; }
.view.on { width: 50px; background: #c6c6c6; }
.zoom { width: 24px; height: 24px; padding-top: 2px; box-sizing: border-box; }
.slider { width: 125px; height: 20px; background: linear-gradient(#b0b0b0, #b0b0b0) center / 100% 1px no-repeat; }
.slider::-webkit-slider-thumb { appearance: none; width: 6px; height: 14px; background: #777; }
.percent { width: 48px; text-align: right; font: 15px/20px "Open Sans", sans-serif; color: #444; padding-top: 2px; }

.marks { position: absolute; left: 0; top: 0; z-index: 3; pointer-events: none; }
.ime { position: absolute; z-index: 3; left: 692px; bottom: 3px; display: flex; align-items: flex-end; height: 33px; }
.imebar { display: flex; align-items: center; gap: 9px; height: 26px; box-sizing: border-box; margin-left: 12px; padding: 0 3px 0 27px; background: #fff; border: 1px solid #8fc0f7; }
.imebar b { color: #1b84f2; font-size: 15px; }
.ifly { position: absolute; left: 0; top: 2px; width: 32px; height: 32px; box-sizing: border-box; border: 2px solid #1b84f2; border-radius: 50%; background: #fff; color: #1b84f2; font: 700 10px/28px "Open Sans", sans-serif; text-align: center; }
.watermark { position: absolute; z-index: 2; right: 97px; bottom: 32px; overflow: visible; pointer-events: none; opacity: .85; }
.wm { fill: #fff; stroke: #fff; stroke-width: 1; stroke-linejoin: round; filter: drop-shadow(0 0 1px #999) drop-shadow(0 0 1px #bbb); }
.bai { font: 700 78px "Liberation Sans", sans-serif; stroke-width: 4; }
.jy { font: 900 58px "Noto Sans CJK SC", sans-serif; }
.url { font: 400 40px "Open Sans", sans-serif; }
.du { font: 700 46px "Liberation Sans", sans-serif; fill: #fff; stroke: #c4c4c4; stroke-width: 1; }
</style>
